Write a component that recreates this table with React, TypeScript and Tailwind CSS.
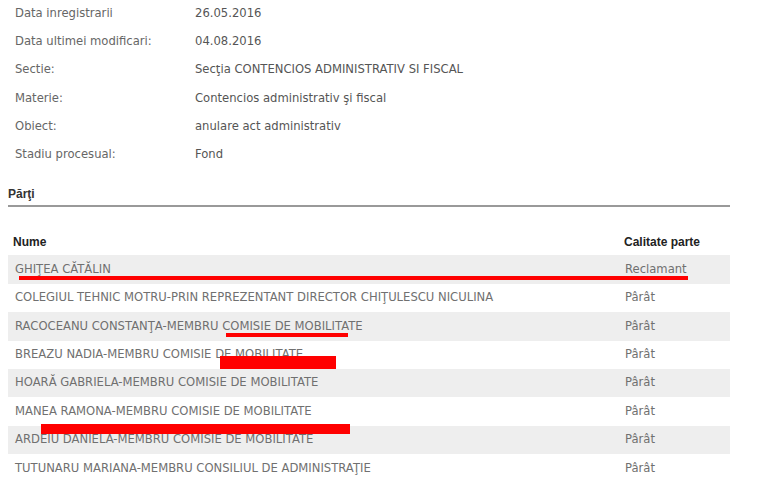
import React from "react";

const details = [
  ["Data inregistrarii", "26.05.2016"],
  ["Data ultimei modificari:", "04.08.2016"],
  ["Sectie:", "Secţia CONTENCIOS ADMINISTRATIV SI FISCAL"],
  ["Materie:", "Contencios administrativ şi fiscal"],
  ["Obiect:", "anulare act administrativ"],
  ["Stadiu procesual:", "Fond"],
];

const parti = [
  ["GHIŢEA CĂTĂLIN", "Reclamant"],
  ["COLEGIUL TEHNIC MOTRU-PRIN REPREZENTANT DIRECTOR CHIŢULESCU NICULINA", "Pârât"],
  ["RACOCEANU CONSTANŢA-MEMBRU COMISIE DE MOBILITATE", "Pârât"],
  ["BREAZU NADIA-MEMBRU COMISIE DE MOBILITATE", "Pârât"],
  ["HOARĂ GABRIELA-MEMBRU COMISIE DE MOBILITATE", "Pârât"],
  ["MANEA RAMONA-MEMBRU COMISIE DE MOBILITATE", "Pârât"],
  ["ARDEIU DANIELA-MEMBRU COMISIE DE MOBILITATE", "Pârât"],
  ["TUTUNARU MARIANA-MEMBRU CONSILIUL DE ADMINISTRAŢIE", "Pârât"],
];

export default function App() {
  return (
    <div className="relative h-[478px] w-[768px] overflow-hidden bg-white font-['DejaVu_Sans',sans-serif] text-[11.6px]">
      {/* detalii dosar */}
      <div className="-mt-[1px]">
        {details.map(([label, value]) => (
          <div key={label} className="flex h-[28.4px] items-center">
            <span className="w-[195px] pl-[15px] text-[#666]">{label}</span>
            <span className="text-[#555]">{value}</span>
          </div>
        ))}
      </div>

      {/* parti */}
      <div className="ml-[8px] w-[722px]">
        <div className="mt-[16px] border-b-2 border-[#999] pb-[2px] font-['Liberation_Sans',sans-serif] text-[12px] font-bold text-[#333]">
          Părţi
        </div>

        <div className="mt-[27px] flex h-[16px] items-center font-['Liberation_Sans',sans-serif] text-[12px] font-bold text-[#222]">
          <span className="flex-1 pl-[5px]">Nume</span>
          <span className="w-[106px]">Calitate parte</span>
        </div>

        <div className="mt-[5px]">
          {parti.map(([nume, calitate], i) => (
            <div
              key={nume}
              className={
                "flex h-[28.4px] items-center text-[#707070] " +
                (i % 2 === 0 ? "bg-[#eeeeee]" : "bg-white")
              }
            >
              <span className="flex-1 pl-[7px]">{nume}</span>
              <span className="w-[105px]">{calitate}</span>
            </div>
          ))}
        </div>
      </div>

      {/* marcaje rosii peste captura */}
      <div className="absolute left-[19px] top-[276px] h-[4px] w-[669px] bg-[#ff0000]" />
      <div className="absolute left-[226px] top-[333px] h-[4px] w-[122px] bg-[#ff0000]" />
      <div className="absolute left-[220px] top-[356px] h-[13px] w-[116px] bg-[#ff0000]" />
      <div className="absolute left-[41px] top-[424px] h-[10px] w-[309px] bg-[#ff0000]" />
    </div>
  );
}
